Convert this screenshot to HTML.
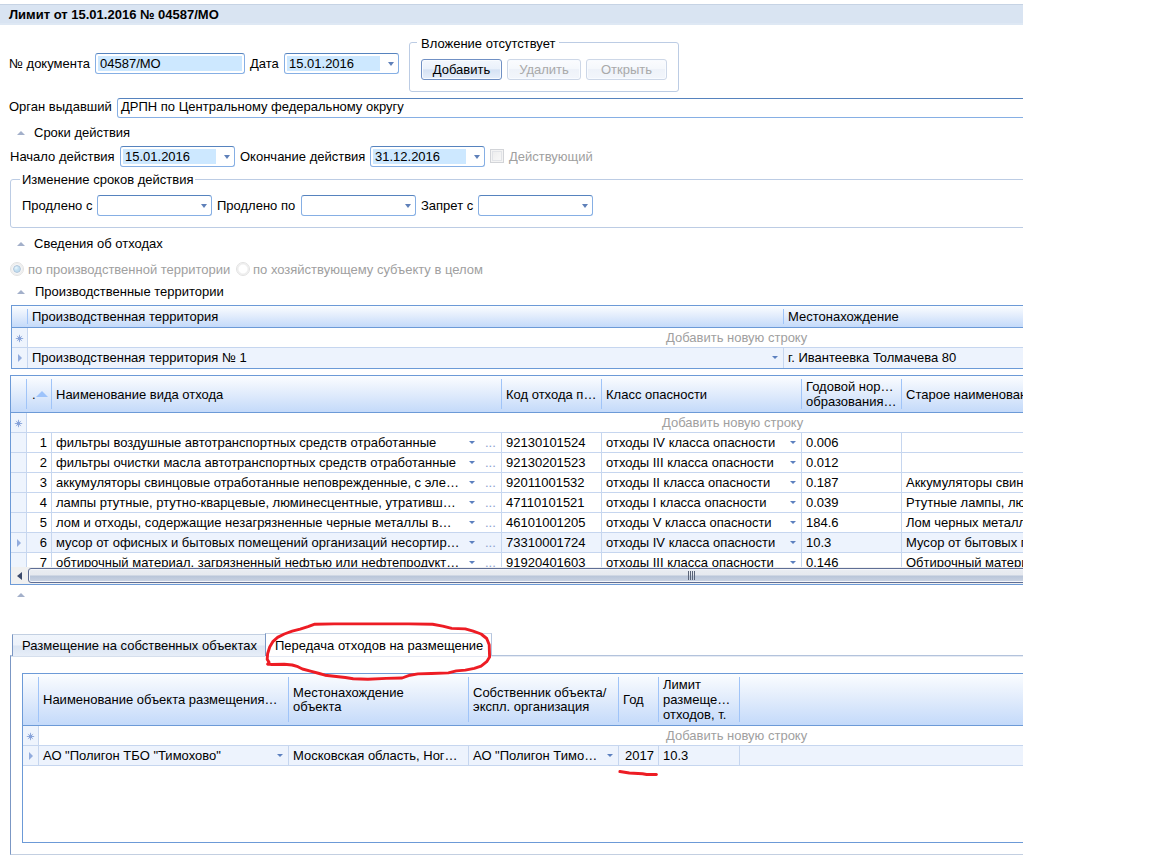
<!DOCTYPE html>
<html lang="ru"><head><meta charset="utf-8"><title>Лимит</title>
<style>
html,body{margin:0;padding:0;background:#fff;}
body{width:1152px;height:859px;overflow:hidden;position:relative;font:13px "Liberation Sans",Arial,sans-serif;color:#000;}
#app{position:absolute;left:0;top:0;width:1023px;height:859px;overflow:hidden;}
.a{position:absolute;white-space:nowrap;line-height:15px;}
.t{position:absolute;white-space:nowrap;line-height:15px;height:15px;}
.g{color:#a0a0a0;}
.title{left:0;top:4px;width:1023px;height:21px;background:linear-gradient(#c6d3e4 0,#c6d3e4 1px,#d9e4f2 1px,#d9e4f2 19px,#dee8f4 19px);}
.inp{position:absolute;box-sizing:border-box;border:1px solid #86afe4;border-top-color:#5683be;border-radius:3px;background:#fff;height:21px;}
.inp .f{position:absolute;left:2px;top:2px;bottom:2px;background:#cde8ff;}
.inp .v{position:absolute;left:4px;top:2px;line-height:15px;white-space:nowrap;}
.dd{position:absolute;width:0;height:0;border-left:3.5px solid transparent;border-right:3.5px solid transparent;border-top:4px solid #5f80b9;}
.fs{position:absolute;box-sizing:border-box;border:1px solid #bccce4;border-radius:3px;}
.lg{position:absolute;background:#fff;padding:0 2px;line-height:15px;white-space:nowrap;}
.btn{position:absolute;box-sizing:border-box;height:21px;border:1px solid #7090c4;border-radius:3px;text-align:center;line-height:19px;box-shadow:inset 0 0 0 1px #f8fbff;background:linear-gradient(#f3f7fd 0%,#eaf1fb 46%,#d5e2f4 52%,#e7effa 100%);}
.btn.dis{color:#a9a9a9;border-color:#cdd7e7;background:linear-gradient(#fbfcfe 0%,#f5f8fc 45%,#eef2f9 50%,#f3f6fb 100%);}
.up{position:absolute;width:0;height:0;border-left:4px solid transparent;border-right:4px solid transparent;border-bottom:4px solid #a3b0ca;}
.grid{position:absolute;box-sizing:border-box;border:1px solid #6c9ad7;background:#fff;overflow:hidden;}
.hd{position:absolute;left:0;right:0;top:0;background:linear-gradient(#fbfdff 0%,#e3edfc 45%,#c4dafa 100%);border-bottom:1px solid #6c9ad7;}
.vs{position:absolute;width:1px;background:#a0c4f8;}
.row{position:absolute;left:0;right:0;border-bottom:1px solid #c6d6ef;box-sizing:border-box;}
.ind{position:absolute;left:0;top:0;bottom:0;background:#eef4fd;border-right:1px solid #c6d6ef;box-sizing:border-box;}
.sel{background:#edf3fd;}
.cl{position:absolute;top:0;bottom:0;width:1px;background:#c6d6ef;}

.star{position:absolute;width:9px;height:9px;}
.star:before,.star:after{content:"";position:absolute;}
.rarr{position:absolute;width:0;height:0;border-top:4px solid transparent;border-bottom:4px solid transparent;border-left:4px solid #92acde;}
.sortup{position:absolute;width:0;height:0;border-left:6px solid transparent;border-right:6px solid transparent;border-bottom:6px solid #9dc3fb;}
.dots{position:absolute;width:10px;height:1px;background:linear-gradient(90deg,#8aa 0,#8aa 1px,transparent 1px,transparent 4px,#8aa 4px,#8aa 5px,transparent 5px,transparent 8px,#8aa 8px,#8aa 9px,transparent 9px);}
.sb{position:absolute;background:#f0f0f0;}
.sbl{position:absolute;left:6px;top:4.5px;width:0;height:0;border-top:4.5px solid transparent;border-bottom:4.5px solid transparent;border-right:5px solid #3c4a6b;}
.thumb{position:absolute;box-sizing:border-box;left:17px;right:-5px;top:1px;height:15px;border:1px solid #5f6e95;border-radius:3px;box-shadow:inset 0 0 0 1px #f4f6fa;background:linear-gradient(#eaedf2 0%,#e6e9ef 46%,#b9c5d9 54%,#ccd5e4 100%);}
.grip{position:absolute;left:677px;top:4px;width:7px;height:9px;background:linear-gradient(90deg,#5b6478 0,#5b6478 1px,transparent 1px,transparent 2px,#5b6478 2px,#5b6478 3px,transparent 3px,transparent 4px,#5b6478 4px,#5b6478 5px,transparent 5px,transparent 6px,#5b6478 6px);}
.tab{box-sizing:border-box;border-left:1px solid #7b97c4;border-top:1px solid #c3d0e2;background:linear-gradient(#f0f5fc 0%,#edf2fa 47%,#dbe5f3 53%,#e7eef8 100%);}
.tabsel{box-sizing:border-box;border-left:1px solid #7b97c4;border-top:1px solid #c8d4e5;border-right:1px solid #b5c5de;background:#fff;}
.rad{width:12px;height:12px;border:1px solid #e2e2e2;border-radius:50%;background:radial-gradient(circle,#fff 0,#fff 45%,#ececec 62%,#fdfdfd 78%,#fff 100%);}
.dd2{position:absolute;width:0;height:0;border-left:3px solid transparent;border-right:3px solid transparent;border-top:3.2px solid #5c80bf;}
.dt{color:#8ba0cf;}
</style></head><body>
<div id="app">
<div class="a title"></div>
<div class="t" style="left:9px;top:7px;font-weight:bold;">Лимит от 15.01.2016 № 04587/МО</div>

<!-- row 1 -->
<div class="t" style="left:9px;top:56px;">№ документа</div>
<div class="inp" style="left:95px;top:53px;width:150px;"><div class="f" style="right:2px"></div><div class="v">04587/МО</div></div>
<div class="t" style="left:250px;top:56px;">Дата</div>
<div class="inp" style="left:284px;top:53px;width:115px;"><div class="f" style="width:93px"></div><div class="v">15.01.2016</div><div class="dd" style="left:103px;top:8px"></div></div>

<div class="fs" style="left:409px;top:42px;width:270px;height:50px;"></div>
<div class="lg" style="left:417px;top:36px;padding:0 4px;">Вложение отсутствует</div>
<div class="btn" style="left:421px;top:59px;width:81px;">Добавить</div>
<div class="btn dis" style="left:507px;top:59px;width:74px;">Удалить</div>
<div class="btn dis" style="left:586px;top:59px;width:81px;">Открыть</div>

<!-- row 2 -->
<div class="t" style="left:9px;top:99px;">Орган выдавший</div>
<div class="inp" style="left:117px;top:98px;width:920px;height:20px;"><div class="v" style="top:0;left:3px">ДРПН по Центральному федеральному округу</div></div>

<div class="up" style="left:17px;top:131px"></div>
<div class="t" style="left:34px;top:125px;">Сроки действия</div>

<div class="t" style="left:10px;top:149px;">Начало действия</div>
<div class="inp" style="left:120px;top:146px;width:115px;"><div class="f" style="width:93px"></div><div class="v">15.01.2016</div><div class="dd" style="left:103px;top:8px"></div></div>
<div class="t" style="left:240px;top:149px;">Окончание действия</div>
<div class="inp" style="left:370px;top:146px;width:115px;"><div class="f" style="width:93px"></div><div class="v">31.12.2016</div><div class="dd" style="left:103px;top:8px"></div></div>
<div class="a" style="left:490px;top:149px;width:12px;height:12px;border:1px solid #d2d4d8;background:linear-gradient(135deg,#ececec,#fafafa);box-shadow:inset 0 0 0 1px #f4f4f4, inset 0 0 0 2px #e2e4e8;"></div>
<div class="t g" style="left:509px;top:149px;">Действующий</div>

<div class="fs" style="left:10px;top:179px;width:1030px;height:49px;"></div>
<div class="lg" style="left:20px;top:172px;">Изменение сроков действия</div>
<div class="t" style="left:22px;top:198px;">Продлено с</div>
<div class="inp" style="left:97px;top:195px;width:115px;"><div class="dd" style="left:103px;top:8px"></div></div>
<div class="t" style="left:217px;top:198px;">Продлено по</div>
<div class="inp" style="left:301px;top:195px;width:115px;"><div class="dd" style="left:103px;top:8px"></div></div>
<div class="t" style="left:421px;top:198px;">Запрет с</div>
<div class="inp" style="left:478px;top:195px;width:115px;"><div class="dd" style="left:103px;top:8px"></div></div>

<div class="up" style="left:17px;top:242px"></div>
<div class="t" style="left:34px;top:236px;">Сведения об отходах</div>

<div class="a rad" style="left:10px;top:262px;"></div>
<div class="a" style="left:13px;top:265px;width:8px;height:8px;box-sizing:border-box;border:1px solid #b1c5d9;border-radius:50%;background:radial-gradient(circle at 35% 30%,#eaf7fd 0,#c4e0f2 45%,#b9d9ee 100%);"></div>
<div class="t g" style="left:28px;top:262px;">по производственной территории</div>
<div class="a rad" style="left:236px;top:262px;"></div>
<div class="t g" style="left:253px;top:262px;">по хозяйствующему субъекту в целом</div>

<div class="up" style="left:17px;top:289.5px"></div>
<div class="t" style="left:35px;top:284px;">Производственные территории</div>

<!-- GRID 1 -->
<div class="grid" style="left:11px;top:305px;width:1030px;height:64px;">
  <div class="hd" style="height:21px;"></div>
  <div class="vs" style="left:15px;top:3px;height:15px;"></div>
  <div class="vs" style="left:771px;top:3px;height:15px;"></div>
  <div class="t" style="left:20px;top:3px;">Производственная территория</div>
  <div class="t" style="left:776px;top:3px;">Местонахождение</div>
  <div class="row" style="top:22px;height:20px;"><div class="ind" style="width:16px;"></div>
    <div class="t g" style="left:654px;top:2px;">Добавить новую строку</div></div>
  <div class="row sel" style="top:42px;height:20px;border-bottom:none;"><div class="ind" style="width:16px;"></div>
    <div class="cl" style="left:771px;"></div>
    <div class="t" style="left:20px;top:2px;">Производственная территория № 1</div>
    <div class="dd2" style="left:760px;top:8px;"></div>
    <div class="t" style="left:776px;top:2px;">г. Ивантеевка Толмачева 80</div></div>
  <svg class="a" style="left:3px;top:28px;" width="9" height="9" viewBox="0 0 9 9"><g stroke="#93addf" stroke-width="1" stroke-linecap="butt"><path d="M4.5 0.8V8.2M0.8 4.5H8.2"/><path d="M1.9 1.9L7.1 7.1M7.1 1.9L1.9 7.1" stroke="#a9bde4"/></g><circle cx="4.5" cy="4.5" r="1.9" fill="#86a2d9"/></svg>
  <div class="rarr" style="left:6px;top:48px;"></div>
</div>

<!-- GRID 2 -->
<div class="grid" style="left:10px;top:375px;width:1030px;height:210px;">
  <div class="hd" style="height:36px;"></div>
  <div class="vs" style="left:15px;top:3px;height:30px;"></div>
  <div class="vs" style="left:40px;top:3px;height:30px;"></div>
  <div class="vs" style="left:490px;top:3px;height:30px;"></div>
  <div class="vs" style="left:590px;top:3px;height:30px;"></div>
  <div class="vs" style="left:790px;top:3px;height:30px;"></div>
  <div class="vs" style="left:890px;top:3px;height:30px;"></div>
  <div class="t" style="left:21px;top:11px;">.</div>
  <div class="sortup" style="left:25px;top:15px;"></div>
  <div class="t" style="left:45px;top:11px;">Наименование вида отхода</div>
  <div class="t" style="left:495px;top:11px;">Код отхода п…</div>
  <div class="t" style="left:595px;top:11px;">Класс опасности</div>
  <div class="t" style="left:795px;top:3px;">Годовой нор…</div>
  <div class="t" style="left:795px;top:18px;">образования…</div>
  <div class="t" style="left:895px;top:11px;">Старое наименование отхода</div>
  <div class="row" style="top:37px;height:20px;"><div class="ind" style="width:16px;"></div><div class="t g" style="left:651px;top:2px;">Добавить новую строку</div></div>
  <svg class="a" style="left:3px;top:43px;" width="9" height="9" viewBox="0 0 9 9"><g stroke="#93addf" stroke-width="1" stroke-linecap="butt"><path d="M4.5 0.8V8.2M0.8 4.5H8.2"/><path d="M1.9 1.9L7.1 7.1M7.1 1.9L1.9 7.1" stroke="#a9bde4"/></g><circle cx="4.5" cy="4.5" r="1.9" fill="#86a2d9"/></svg>
  <div class="row" style="top:57px;height:20px;"><div class="ind" style="width:16px;"></div>
    <div class="cl" style="left:40px;"></div>
    <div class="cl" style="left:490px;"></div>
    <div class="cl" style="left:590px;"></div>
    <div class="cl" style="left:790px;"></div>
    <div class="cl" style="left:890px;"></div>
    <div class="t" style="left:16px;width:20px;text-align:right;top:2px;">1</div>
    <div class="t" style="left:45px;top:2px;">фильтры воздушные автотранспортных средств отработанные</div>
    <div class="dd2" style="left:458px;top:8px;"></div>
    <div class="t dt" style="left:474px;top:2px;">...</div>
    <div class="t" style="left:495px;top:2px;">92130101524</div>
    <div class="t" style="left:595px;top:2px;">отходы IV класса опасности</div>
    <div class="dd2" style="left:779px;top:8px;"></div>
    <div class="t" style="left:795px;top:2px;">0.006</div>
  </div>
  <div class="row" style="top:77px;height:20px;"><div class="ind" style="width:16px;"></div>
    <div class="cl" style="left:40px;"></div>
    <div class="cl" style="left:490px;"></div>
    <div class="cl" style="left:590px;"></div>
    <div class="cl" style="left:790px;"></div>
    <div class="cl" style="left:890px;"></div>
    <div class="t" style="left:16px;width:20px;text-align:right;top:2px;">2</div>
    <div class="t" style="left:45px;top:2px;">фильтры очистки масла автотранспортных средств отработанные</div>
    <div class="dd2" style="left:458px;top:8px;"></div>
    <div class="t dt" style="left:474px;top:2px;">...</div>
    <div class="t" style="left:495px;top:2px;">92130201523</div>
    <div class="t" style="left:595px;top:2px;">отходы III класса опасности</div>
    <div class="dd2" style="left:779px;top:8px;"></div>
    <div class="t" style="left:795px;top:2px;">0.012</div>
  </div>
  <div class="row" style="top:97px;height:20px;"><div class="ind" style="width:16px;"></div>
    <div class="cl" style="left:40px;"></div>
    <div class="cl" style="left:490px;"></div>
    <div class="cl" style="left:590px;"></div>
    <div class="cl" style="left:790px;"></div>
    <div class="cl" style="left:890px;"></div>
    <div class="t" style="left:16px;width:20px;text-align:right;top:2px;">3</div>
    <div class="t" style="left:45px;top:2px;">аккумуляторы свинцовые отработанные неповрежденные, с эле…</div>
    <div class="dd2" style="left:458px;top:8px;"></div>
    <div class="t dt" style="left:474px;top:2px;">...</div>
    <div class="t" style="left:495px;top:2px;">92011001532</div>
    <div class="t" style="left:595px;top:2px;">отходы II класса опасности</div>
    <div class="dd2" style="left:779px;top:8px;"></div>
    <div class="t" style="left:795px;top:2px;">0.187</div>
    <div class="t" style="left:895px;top:2px;">Аккумуляторы свинцовые отработанные</div>
  </div>
  <div class="row" style="top:117px;height:20px;"><div class="ind" style="width:16px;"></div>
    <div class="cl" style="left:40px;"></div>
    <div class="cl" style="left:490px;"></div>
    <div class="cl" style="left:590px;"></div>
    <div class="cl" style="left:790px;"></div>
    <div class="cl" style="left:890px;"></div>
    <div class="t" style="left:16px;width:20px;text-align:right;top:2px;">4</div>
    <div class="t" style="left:45px;top:2px;">лампы ртутные, ртутно-кварцевые, люминесцентные, утративш…</div>
    <div class="dd2" style="left:458px;top:8px;"></div>
    <div class="t dt" style="left:474px;top:2px;">...</div>
    <div class="t" style="left:495px;top:2px;">47110101521</div>
    <div class="t" style="left:595px;top:2px;">отходы I класса опасности</div>
    <div class="dd2" style="left:779px;top:8px;"></div>
    <div class="t" style="left:795px;top:2px;">0.039</div>
    <div class="t" style="left:895px;top:2px;">Ртутные лампы, люминесцентные</div>
  </div>
  <div class="row" style="top:137px;height:20px;"><div class="ind" style="width:16px;"></div>
    <div class="cl" style="left:40px;"></div>
    <div class="cl" style="left:490px;"></div>
    <div class="cl" style="left:590px;"></div>
    <div class="cl" style="left:790px;"></div>
    <div class="cl" style="left:890px;"></div>
    <div class="t" style="left:16px;width:20px;text-align:right;top:2px;">5</div>
    <div class="t" style="left:45px;top:2px;">лом и отходы, содержащие незагрязненные черные металлы в…</div>
    <div class="dd2" style="left:458px;top:8px;"></div>
    <div class="t dt" style="left:474px;top:2px;">...</div>
    <div class="t" style="left:495px;top:2px;">46101001205</div>
    <div class="t" style="left:595px;top:2px;">отходы V класса опасности</div>
    <div class="dd2" style="left:779px;top:8px;"></div>
    <div class="t" style="left:795px;top:2px;">184.6</div>
    <div class="t" style="left:895px;top:2px;">Лом черных металлов несортированный</div>
  </div>
  <div class="row sel" style="top:157px;height:20px;"><div class="ind" style="width:16px;"></div>
    <div class="cl" style="left:40px;"></div>
    <div class="cl" style="left:490px;"></div>
    <div class="cl" style="left:590px;"></div>
    <div class="cl" style="left:790px;"></div>
    <div class="cl" style="left:890px;"></div>
    <div class="t" style="left:16px;width:20px;text-align:right;top:2px;">6</div>
    <div class="t" style="left:45px;top:2px;">мусор от офисных и бытовых помещений организаций несортир…</div>
    <div class="dd2" style="left:458px;top:8px;"></div>
    <div class="t dt" style="left:474px;top:2px;">...</div>
    <div class="t" style="left:495px;top:2px;">73310001724</div>
    <div class="t" style="left:595px;top:2px;">отходы IV класса опасности</div>
    <div class="dd2" style="left:779px;top:8px;"></div>
    <div class="t" style="left:795px;top:2px;">10.3</div>
    <div class="t" style="left:895px;top:2px;">Мусор от бытовых помещений организаций</div>
  </div>
  <div class="row" style="top:177px;height:20px;"><div class="ind" style="width:16px;"></div>
    <div class="cl" style="left:40px;"></div>
    <div class="cl" style="left:490px;"></div>
    <div class="cl" style="left:590px;"></div>
    <div class="cl" style="left:790px;"></div>
    <div class="cl" style="left:890px;"></div>
    <div class="t" style="left:16px;width:20px;text-align:right;top:2px;">7</div>
    <div class="t" style="left:45px;top:2px;">обтирочный материал, загрязненный нефтью или нефтепродукт…</div>
    <div class="dd2" style="left:458px;top:8px;"></div>
    <div class="t dt" style="left:474px;top:2px;">...</div>
    <div class="t" style="left:495px;top:2px;">91920401603</div>
    <div class="t" style="left:595px;top:2px;">отходы III класса опасности</div>
    <div class="dd2" style="left:779px;top:8px;"></div>
    <div class="t" style="left:795px;top:2px;">0.146</div>
    <div class="t" style="left:895px;top:2px;">Обтирочный материал, загрязненный маслами</div>
  </div>
  <div class="rarr" style="left:6px;top:163px;"></div>
  <div class="sb" style="left:0;right:0;top:191px;height:17px;"><div class="sbl"></div><div class="thumb"></div><div class="grip"></div></div>
</div>

<!-- small group arrow -->
<div class="up" style="left:17px;top:593px"></div>
<!-- TABS -->
<div class="a" style="left:10px;top:655px;width:1030px;height:200px;box-sizing:border-box;border:1px solid #b3c3dc;border-left-color:#7b97c4;border-bottom-color:#c3cfe1;background:#fff;"></div>
<div class="a" style="left:11px;top:656px;width:1020px;height:1px;background:#e6ebf4;"></div>
<div class="a" style="left:11px;top:656px;width:254px;height:1px;background:#d5dfed;"></div>
<div class="a tab" style="left:12px;top:634px;width:253px;height:22px;"></div>
<div class="t" style="left:22px;top:638px;">Размещение на собственных объектах</div>
<div class="a tabsel" style="left:265px;top:633px;width:227px;height:23px;"></div>
<div class="t" style="left:275px;top:638px;">Передача отходов на размещение</div>
<!-- GRID 3 -->
<div class="grid" style="left:22px;top:673px;width:1020px;height:170px;">
  <div class="hd" style="height:51px;"></div>
  <div class="vs" style="left:15px;top:3px;height:45px;"></div>
  <div class="vs" style="left:265px;top:3px;height:45px;"></div>
  <div class="vs" style="left:445px;top:3px;height:45px;"></div>
  <div class="vs" style="left:595px;top:3px;height:45px;"></div>
  <div class="vs" style="left:635px;top:3px;height:45px;"></div>
  <div class="vs" style="left:716px;top:3px;height:45px;"></div>
  <div class="t" style="left:20px;top:18px;">Наименование объекта размещения…</div>
  <div class="t" style="left:270px;top:11px;">Местонахождение</div>
  <div class="t" style="left:270px;top:25px;">объекта</div>
  <div class="t" style="left:450px;top:11px;">Собственник объекта/</div>
  <div class="t" style="left:450px;top:25px;">экспл. организация</div>
  <div class="t" style="left:600px;top:18px;">Год</div>
  <div class="t" style="left:640px;top:3px;">Лимит</div>
  <div class="t" style="left:640px;top:18px;">размеще…</div>
  <div class="t" style="left:640px;top:33px;">отходов, т.</div>
  <div class="row" style="top:52px;height:20px;"><div class="ind" style="width:16px;"></div>
    <div class="t g" style="left:643px;top:2px;">Добавить новую строку</div></div>
  <div class="row sel" style="top:72px;height:20px;"><div class="ind" style="width:16px;"></div>
    <div class="cl" style="left:265px;"></div><div class="cl" style="left:445px;"></div><div class="cl" style="left:595px;"></div><div class="cl" style="left:635px;"></div><div class="cl" style="left:716px;"></div>
    <div class="t" style="left:20px;top:2px;">АО "Полигон ТБО "Тимохово"</div>
    <div class="dd2" style="left:254px;top:8px;"></div>
    <div class="t" style="left:270px;top:2px;">Московская область, Ног…</div>
    <div class="t" style="left:450px;top:2px;">АО "Полигон Тимо…</div>
    <div class="dd2" style="left:584px;top:8px;"></div>
    <div class="t" style="left:596px;width:35px;text-align:right;top:2px;">2017</div>
    <div class="t" style="left:640px;top:2px;">10.3</div></div>
  <svg class="a" style="left:3px;top:58px;" width="9" height="9" viewBox="0 0 9 9"><g stroke="#93addf" stroke-width="1" stroke-linecap="butt"><path d="M4.5 0.8V8.2M0.8 4.5H8.2"/><path d="M1.9 1.9L7.1 7.1M7.1 1.9L1.9 7.1" stroke="#a9bde4"/></g><circle cx="4.5" cy="4.5" r="1.9" fill="#86a2d9"/></svg>
  <div class="rarr" style="left:6px;top:78px;"></div>
</div>
<!-- red annotations -->
<svg class="a" style="left:0;top:0;" width="1023" height="859" viewBox="0 0 1023 859" fill="none" stroke="#ed1c24" stroke-width="2.9" stroke-linecap="round" stroke-linejoin="round">
<path d="M267.6 664.1 L269.1 662.2 L267.2 659.4 L267.6 653.8 L269.7 647.0 L273.1 641.3 L277.6 637.4 L284.3 634.0 L292.2 631.2 L300.1 629.2 L308.0 626.7 L314.8 624.2 L334.0 623.9 L356.6 623.9 L385.0 623.9 L408.9 623.9 L432.6 624.2 L442.7 626.1 L451.7 628.4 L465.3 628.9 L473.2 631.2 L481.1 634.0 L486.7 638.5 L489.2 644.7 L489.6 657.1 L486.7 661.7 L481.1 666.2 L474.3 668.4 L465.3 670.1 L456.3 670.9 L448.4 672.9 L431.4 673.5 L417.9 673.9 L410.0 675.2 L402.1 678.0 L386.3 678.4 L367.9 679.2 L353.2 678.8 L345.3 677.5 L334.0 676.3 L325.0 675.2 L319.3 673.5 L311.4 671.3 L302.4 669.0 L297.9 666.7 L292.2 665.0 L284.3 664.3 L271.9 664.5 L267.6 664.1"/>
<path d="M619.9 771.6 L629.3 773.0 L642.5 773.7 L646.7 774.4 L656.4 774.5" stroke-width="3"/>
</svg>

</div>
</body></html>
